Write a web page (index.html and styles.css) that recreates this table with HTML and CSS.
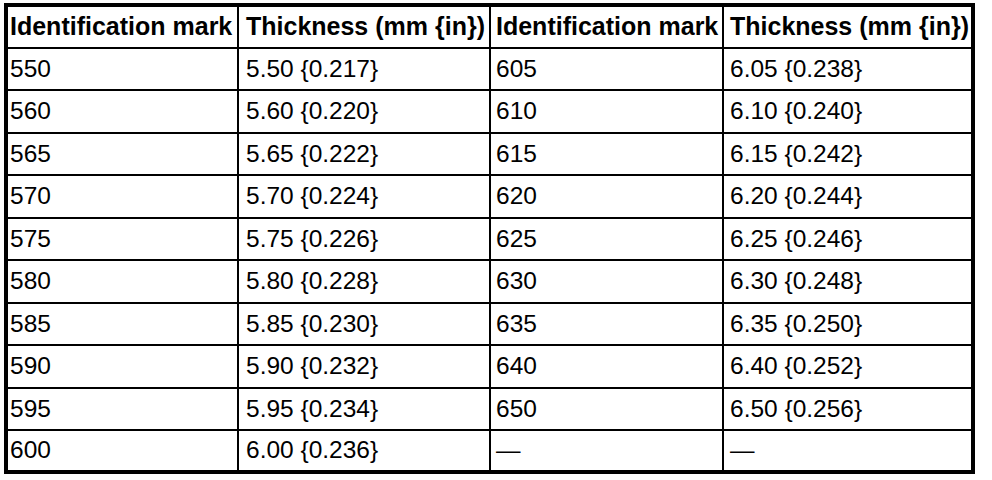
FILE: index.html
```html
<!DOCTYPE html>
<html>
<head>
<meta charset="utf-8">
<link rel="stylesheet" href="styles.css">
</head>
<body>
<table class="spec">
  <colgroup>
    <col class="c1"><col class="c2"><col class="c3"><col class="c4">
  </colgroup>
  <thead>
    <tr>
      <th>Identification mark</th>
      <th>Thickness (mm {in})</th>
      <th>Identification mark</th>
      <th>Thickness (mm {in})</th>
    </tr>
  </thead>
  <tbody>
    <tr><td>550</td><td>5.50 {0.217}</td><td>605</td><td>6.05 {0.238}</td></tr>
    <tr><td>560</td><td>5.60 {0.220}</td><td>610</td><td>6.10 {0.240}</td></tr>
    <tr><td>565</td><td>5.65 {0.222}</td><td>615</td><td>6.15 {0.242}</td></tr>
    <tr><td>570</td><td>5.70 {0.224}</td><td>620</td><td>6.20 {0.244}</td></tr>
    <tr><td>575</td><td>5.75 {0.226}</td><td>625</td><td>6.25 {0.246}</td></tr>
    <tr><td>580</td><td>5.80 {0.228}</td><td>630</td><td>6.30 {0.248}</td></tr>
    <tr><td>585</td><td>5.85 {0.230}</td><td>635</td><td>6.35 {0.250}</td></tr>
    <tr><td>590</td><td>5.90 {0.232}</td><td>640</td><td>6.40 {0.252}</td></tr>
    <tr><td>595</td><td>5.95 {0.234}</td><td>650</td><td>6.50 {0.256}</td></tr>
    <tr class="last"><td>600</td><td>6.00 {0.236}</td><td>—</td><td>—</td></tr>
  </tbody>
</table>
</body>
</html>
```

FILE: styles.css
```css
html, body {
  margin: 0;
  padding: 0;
  background: #ffffff;
}

body {
  padding: 3px 0 0 4px;
  font-family: "Liberation Sans", Arial, sans-serif;
  color: #000000;
}

.spec {
  border-collapse: separate;
  border-spacing: 0;
  border: 4px solid #000000;
  table-layout: fixed;
  width: 971px;
}

.c1 { width: 231px; }
.c2 { width: 252px; }
.c3 { width: 233px; }
.c4 { width: 247px; }

.spec th,
.spec td {
  border-right: 2px solid #000000;
  border-bottom: 2px solid #000000;
  padding: 0 0 0 6px;
  text-align: left;
  white-space: nowrap;
  font-size: 24.5px;
  line-height: 1;
  overflow: hidden;
}

.spec th:nth-child(1),
.spec td:nth-child(1) {
  padding-left: 2px;
}

.spec th:nth-child(2),
.spec td:nth-child(2) {
  padding-left: 7px;
}

.spec th:nth-child(3),
.spec td:nth-child(3) {
  padding-left: 5px;
}

.spec th:last-child,
.spec td:last-child {
  border-right: 0;
}

.spec th {
  font-weight: bold;
  font-size: 25px;
  height: 39.5px;
}

.spec td {
  height: 40.5px;
}

.spec tr.last td {
  border-bottom: 0;
  height: 39px;
}
```
